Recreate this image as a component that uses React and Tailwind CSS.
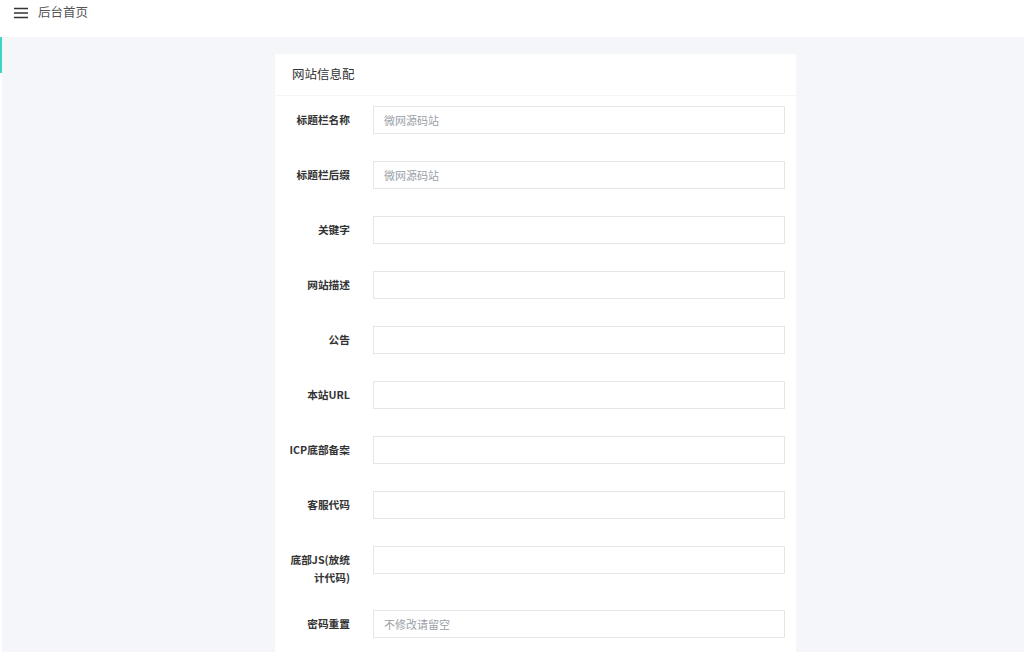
import React from "react";

const rows = [
  { label: "标题栏名称", placeholder: "微网源码站" },
  { label: "标题栏后缀", placeholder: "微网源码站" },
  { label: "关键字" },
  { label: "网站描述" },
  { label: "公告" },
  { label: "本站URL" },
  { label: "ICP底部备案" },
  { label: "客服代码" },
  { label: "底部JS(放统计代码)", tall: true },
  { label: "密码重置", placeholder: "不修改请留空" },
];

function FormRow({ label, placeholder, tall }) {
  return (
    <div className={`flex items-start ${tall ? "mb-[23px]" : "mb-[27px]"}`}>
      <label className="w-[98px] shrink-0 pl-[11px] pr-[23px] pt-[5px] text-right text-[10.7px] font-bold leading-[18px] text-[#333] break-all">
        {label}
      </label>
      <input
        type="text"
        placeholder={placeholder}
        className="h-[28px] flex-1 border border-[#e6e6e6] bg-white px-[10px] text-[11px] text-[#333] outline-none placeholder:text-[#9a9fa8]"
      />
    </div>
  );
}

export default function App() {
  return (
    <div
      className="min-h-[652px] bg-[#f5f6fa]"
      style={{ fontFamily: '"Noto Sans CJK SC", "Noto Sans", sans-serif' }}
    >
      <header className="flex h-[37px] items-start gap-[9px] bg-white pl-[14px] pt-[3px]">
        <svg width="15" height="14" viewBox="0 0 15 14" className="mt-[3px]">
          <path d="M0 2.5h14M0 7h14M0 11.5h14" stroke="#333" strokeWidth="1.3" />
        </svg>
        <span className="text-[12.5px] leading-[18px] text-[#555]">后台首页</span>
      </header>

      <div className="flex">
        <div className="w-[2px] shrink-0 self-stretch bg-white">
          <div className="h-[36px] w-[2px] bg-[#3fd3c1]" />
        </div>

        <main className="flex-1 pt-[17px]">
          <div className="ml-[273px] w-[521px] bg-white">
            <div className="flex h-[42px] items-center border-b border-[#f6f6f6] px-[17px] text-[12.5px] text-[#333]">
              网站信息配
            </div>
            <div className="pb-[10px] pr-[11px] pt-[10px]">
              {rows.map((r) => (
                <FormRow key={r.label} {...r} />
              ))}
            </div>
          </div>
        </main>
      </div>
    </div>
  );
}
